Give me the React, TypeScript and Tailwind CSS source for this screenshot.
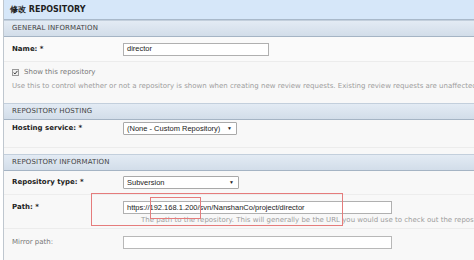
import React from "react";

const Header = ({ title }: { title: string }) => (
  <div className="h-[17px] flex items-center pl-[8px] bg-gradient-to-b from-[#e3ebf4] to-[#d2dde9] border-t border-b border-t-[#c3cfdc] border-b-[#a5b4c4] text-[7px] text-[#444] tracking-[0.1px]">
    {title}
  </div>
);

const Label = ({ children, bold = true }: { children: React.ReactNode; bold?: boolean }) => (
  <div className={`w-[111px] shrink-0 text-[7px] ${bold ? "font-bold text-[#222]" : "text-[#777]"}`}>{children}</div>
);

const Select = ({ value, width }: { value: string; width: string }) => (
  <div
    className={`${width} h-[13px] bg-white border border-[#a9a9a9] rounded-[1px] flex items-center justify-between pl-[3px] pr-[4px] text-[7.5px] text-[#222] font-['Liberation_Sans',sans-serif]`}
  >
    <span>{value}</span>
    <span className="text-[5px] text-[#222]">▼</span>
  </div>
);

export default function App() {
  return (
    <div className="w-[474px] h-[260px] overflow-hidden bg-white relative font-['DejaVu_Sans',sans-serif]">
      <div className="ml-[3px] w-[480px] h-full border-l border-[#bfc7cf] bg-[#f8f8f8] flex flex-col">
        <div className="h-[20px] shrink-0 flex items-center pl-[6px] bg-[#d6e7f9] border-b border-[#a9b9ca] text-[8px] font-bold text-[#1e1e1e]">
          修改 REPOSITORY
        </div>
        <Header title="GENERAL INFORMATION" />

        <div className="h-[25px] shrink-0 flex items-center pl-[8px] border-b border-[#ececec] bg-[#fafafa]">
          <Label>Name: *</Label>
          <div className="w-[146px] h-[13px] bg-white border border-[#b0b0b0] flex items-center pl-[3px] text-[7.5px] text-[#222] font-['Liberation_Sans',sans-serif]">
            director
          </div>
        </div>

        <div className="h-[41px] shrink-0 flex flex-col pl-[8px] pt-[5px] gap-[3px]">
          <div className="flex items-center gap-[5px] text-[7px] text-[#777]">
            <span className="w-[7px] h-[7px] border border-[#999] bg-[#f0f0f0] flex items-center justify-center">
              <svg viewBox="0 0 8 8" className="w-[5px] h-[5px]">
                <path d="M1 4.2 L3.2 6.3 L7 1.5" stroke="#333" strokeWidth="1.5" fill="none" />
              </svg>
            </span>
            Show this repository
          </div>
          <div className="text-[7px] text-[#9d9d9d] whitespace-nowrap">
            Use this to control whether or not a repository is shown when creating new review requests. Existing review requests are unaffected.
          </div>
        </div>

        <Header title="REPOSITORY HOSTING" />
        <div className="h-[28px] shrink-0 flex items-start pt-[2px] pl-[8px] border-b border-[#ececec]">
          <div className="h-[13px] flex items-center">
            <Label>Hosting service: *</Label>
          </div>
          <Select value="(None - Custom Repository)" width="w-[114px]" />
        </div>
        <div className="h-[6px] shrink-0" />

        <Header title="REPOSITORY INFORMATION" />
        <div className="h-[24px] shrink-0 flex items-center pl-[8px] border-b border-[#ededed]">
          <Label>Repository type: *</Label>
          <Select value="Subversion" width="w-[116px]" />
        </div>

        <div className="h-[34px] shrink-0 flex flex-col pl-[8px] pt-[6px] border-b border-[#ececec]">
          <div className="flex items-center">
            <Label>Path: *</Label>
            <div className="w-[269px] h-[13px] bg-white border border-[#b0b0b0] flex items-center pl-[3px] text-[7.5px] text-[#222] font-['Liberation_Sans',sans-serif] whitespace-nowrap">
              https://192.168.1.200/svn/NanshanCo/project/director
            </div>
          </div>
          <div className="pl-[129px] mt-[1px] text-[7px] text-[#9d9d9d] whitespace-nowrap">
            The path to the repository. This will generally be the URL you would use to check out the repository.
          </div>
        </div>

        <div className="h-[26px] shrink-0 flex items-center pl-[8px]">
          <Label bold={false}>Mirror path:</Label>
          <div className="w-[269px] h-[13px] bg-white border border-[#b8b8b8]" />
        </div>
      </div>

      <div className="absolute left-[91px] top-[193px] w-[252px] h-[33px] border border-[#e57c7c]" />
      <div className="absolute left-[150px] top-[197px] w-[51px] h-[22px] border border-[#e57c7c]" />
    </div>
  );
}
